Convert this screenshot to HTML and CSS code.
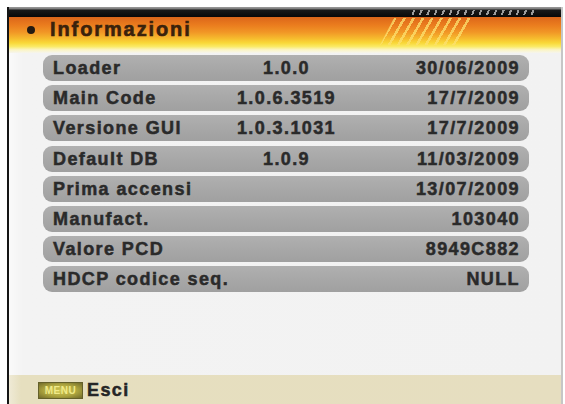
FILE: index.html
```html
<!DOCTYPE html>
<html>
<head>
<meta charset="utf-8">
<link rel="stylesheet" href="styles.css">
</head>
<body>
<div class="screen">
  <div class="topbar"><span class="ticks"></span></div>
  <div class="band">
    <span class="bullet"></span>
    <span class="title">Informazioni</span>
    <span class="stripes"></span>
  </div>
  <div class="list">
    <div class="row"><span class="lbl">Loader</span><span class="mid">1.0.0</span><span class="val">30/06/2009</span></div>
    <div class="row"><span class="lbl">Main Code</span><span class="mid">1.0.6.3519</span><span class="val">17/7/2009</span></div>
    <div class="row"><span class="lbl">Versione GUI</span><span class="mid">1.0.3.1031</span><span class="val">17/7/2009</span></div>
    <div class="row"><span class="lbl">Default DB</span><span class="mid">1.0.9</span><span class="val">11/03/2009</span></div>
    <div class="row"><span class="lbl">Prima accensi</span><span class="mid"></span><span class="val">13/07/2009</span></div>
    <div class="row"><span class="lbl">Manufact.</span><span class="mid"></span><span class="val">103040</span></div>
    <div class="row"><span class="lbl">Valore PCD</span><span class="mid"></span><span class="val">8949C882</span></div>
    <div class="row"><span class="lbl">HDCP codice seq.</span><span class="mid"></span><span class="val">NULL</span></div>
  </div>
  <div class="footer">
    <span class="key">MENU</span>
    <span class="esc">Esci</span>
  </div>
</div>
</body>
</html>
```
FILE: styles.css
```css
* { box-sizing: border-box; }
html, body { margin: 0; padding: 0; background: #ffffff; }
body { width: 565px; height: 404px; overflow: hidden; font-family: "Liberation Sans", Arial, sans-serif; }

.screen {
  margin: 7px 0 0 7px;
  width: 556px;
  height: 397px;
  border-left: 2px solid #151515;
  border-right: 2px solid #c6c6c6;
  background: linear-gradient(90deg, #fafafa 0, #f3f3f3 14px, #f2f2f2 100%);
  display: flex;
  flex-direction: column;
}

.topbar {
  position: relative;
  height: 10px;
  background: linear-gradient(#9a9a9a 0, #7a7a7a 2px, #1a1a1a 3px, #080808 100%);
}
.ticks {
  position: absolute;
  left: 401px;
  top: 3px;
  width: 124px;
  height: 5px;
  background: repeating-linear-gradient(110deg, transparent 0 3px, #9c9c9c 3px 5px, transparent 5px 7px);
}

.band {
  position: relative;
  height: 36px;
  display: flex;
  align-items: flex-start;
  padding-left: 18px;
  background: linear-gradient(#dc661a 0, #ea7c1e 22%, #f19626 42%, #f6bc2e 60%, #f9d838 72%, #faea66 82%, #fbf4c4 91%, #f6f5ee 100%);
}
.bullet {
  width: 8px;
  height: 8px;
  border-radius: 50%;
  background: #231a12;
  margin-top: 9px;
  margin-right: 15px;
}
.title {
  font-size: 20px;
  line-height: 24px;
  font-weight: bold;
  letter-spacing: 1.9px;
  color: #3a220c;
  -webkit-text-stroke: 0.6px #3a220c;
}
.stripes {
  position: absolute;
  left: 371px;
  top: 1px;
  width: 92px;
  height: 27px;
  background: repeating-linear-gradient(120deg, transparent 0 4px, rgba(252, 224, 110, 0.85) 4px 6.5px, transparent 6.5px 8px);
  clip-path: polygon(14px 0, 92px 0, 78px 100%, 0 100%);
  opacity: 0.9;
}

.list {
  padding: 2px 0 0 34px;
  display: flex;
  flex-direction: column;
  gap: 4.2px;
}
.row {
  width: 486px;
  height: 26px;
  border-radius: 9px;
  background: linear-gradient(#b0b0b0, #a6a6a6 60%, #a0a0a0);
  display: grid;
  grid-template-columns: 1fr auto 1fr;
  align-items: center;
  padding: 0 9px 0 10px;
  font-size: 18px;
  line-height: 26px;
  font-weight: bold;
  letter-spacing: 1.4px;
  color: #2a2a2a;
  -webkit-text-stroke: 0.5px #2a2a2a;
  white-space: nowrap;
}
.mid { text-align: center; }
.val { text-align: right; }

.footer {
  margin-top: auto;
  height: 29px;
  background: linear-gradient(90deg, #efead6 0, #e6dfbf 12px, #e6dec0 100%);
  display: flex;
  align-items: center;
  padding-left: 29px;
  gap: 4px;
}
.key {
  width: 45px;
  height: 17px;
  margin-top: 1px;
  background: radial-gradient(ellipse at center, #cfc650 0, #aca43e 55%, #706a2a 100%);
  border: 1px solid #64602a;
  color: #f0ea8a;
  font-size: 10px;
  font-weight: bold;
  line-height: 15px;
  text-align: center;
  letter-spacing: 0.5px;
}
.esc {
  font-size: 18px;
  font-weight: bold;
  letter-spacing: 1.4px;
  color: #262626;
  -webkit-text-stroke: 0.5px #262626;
  line-height: 20px;
}
```
